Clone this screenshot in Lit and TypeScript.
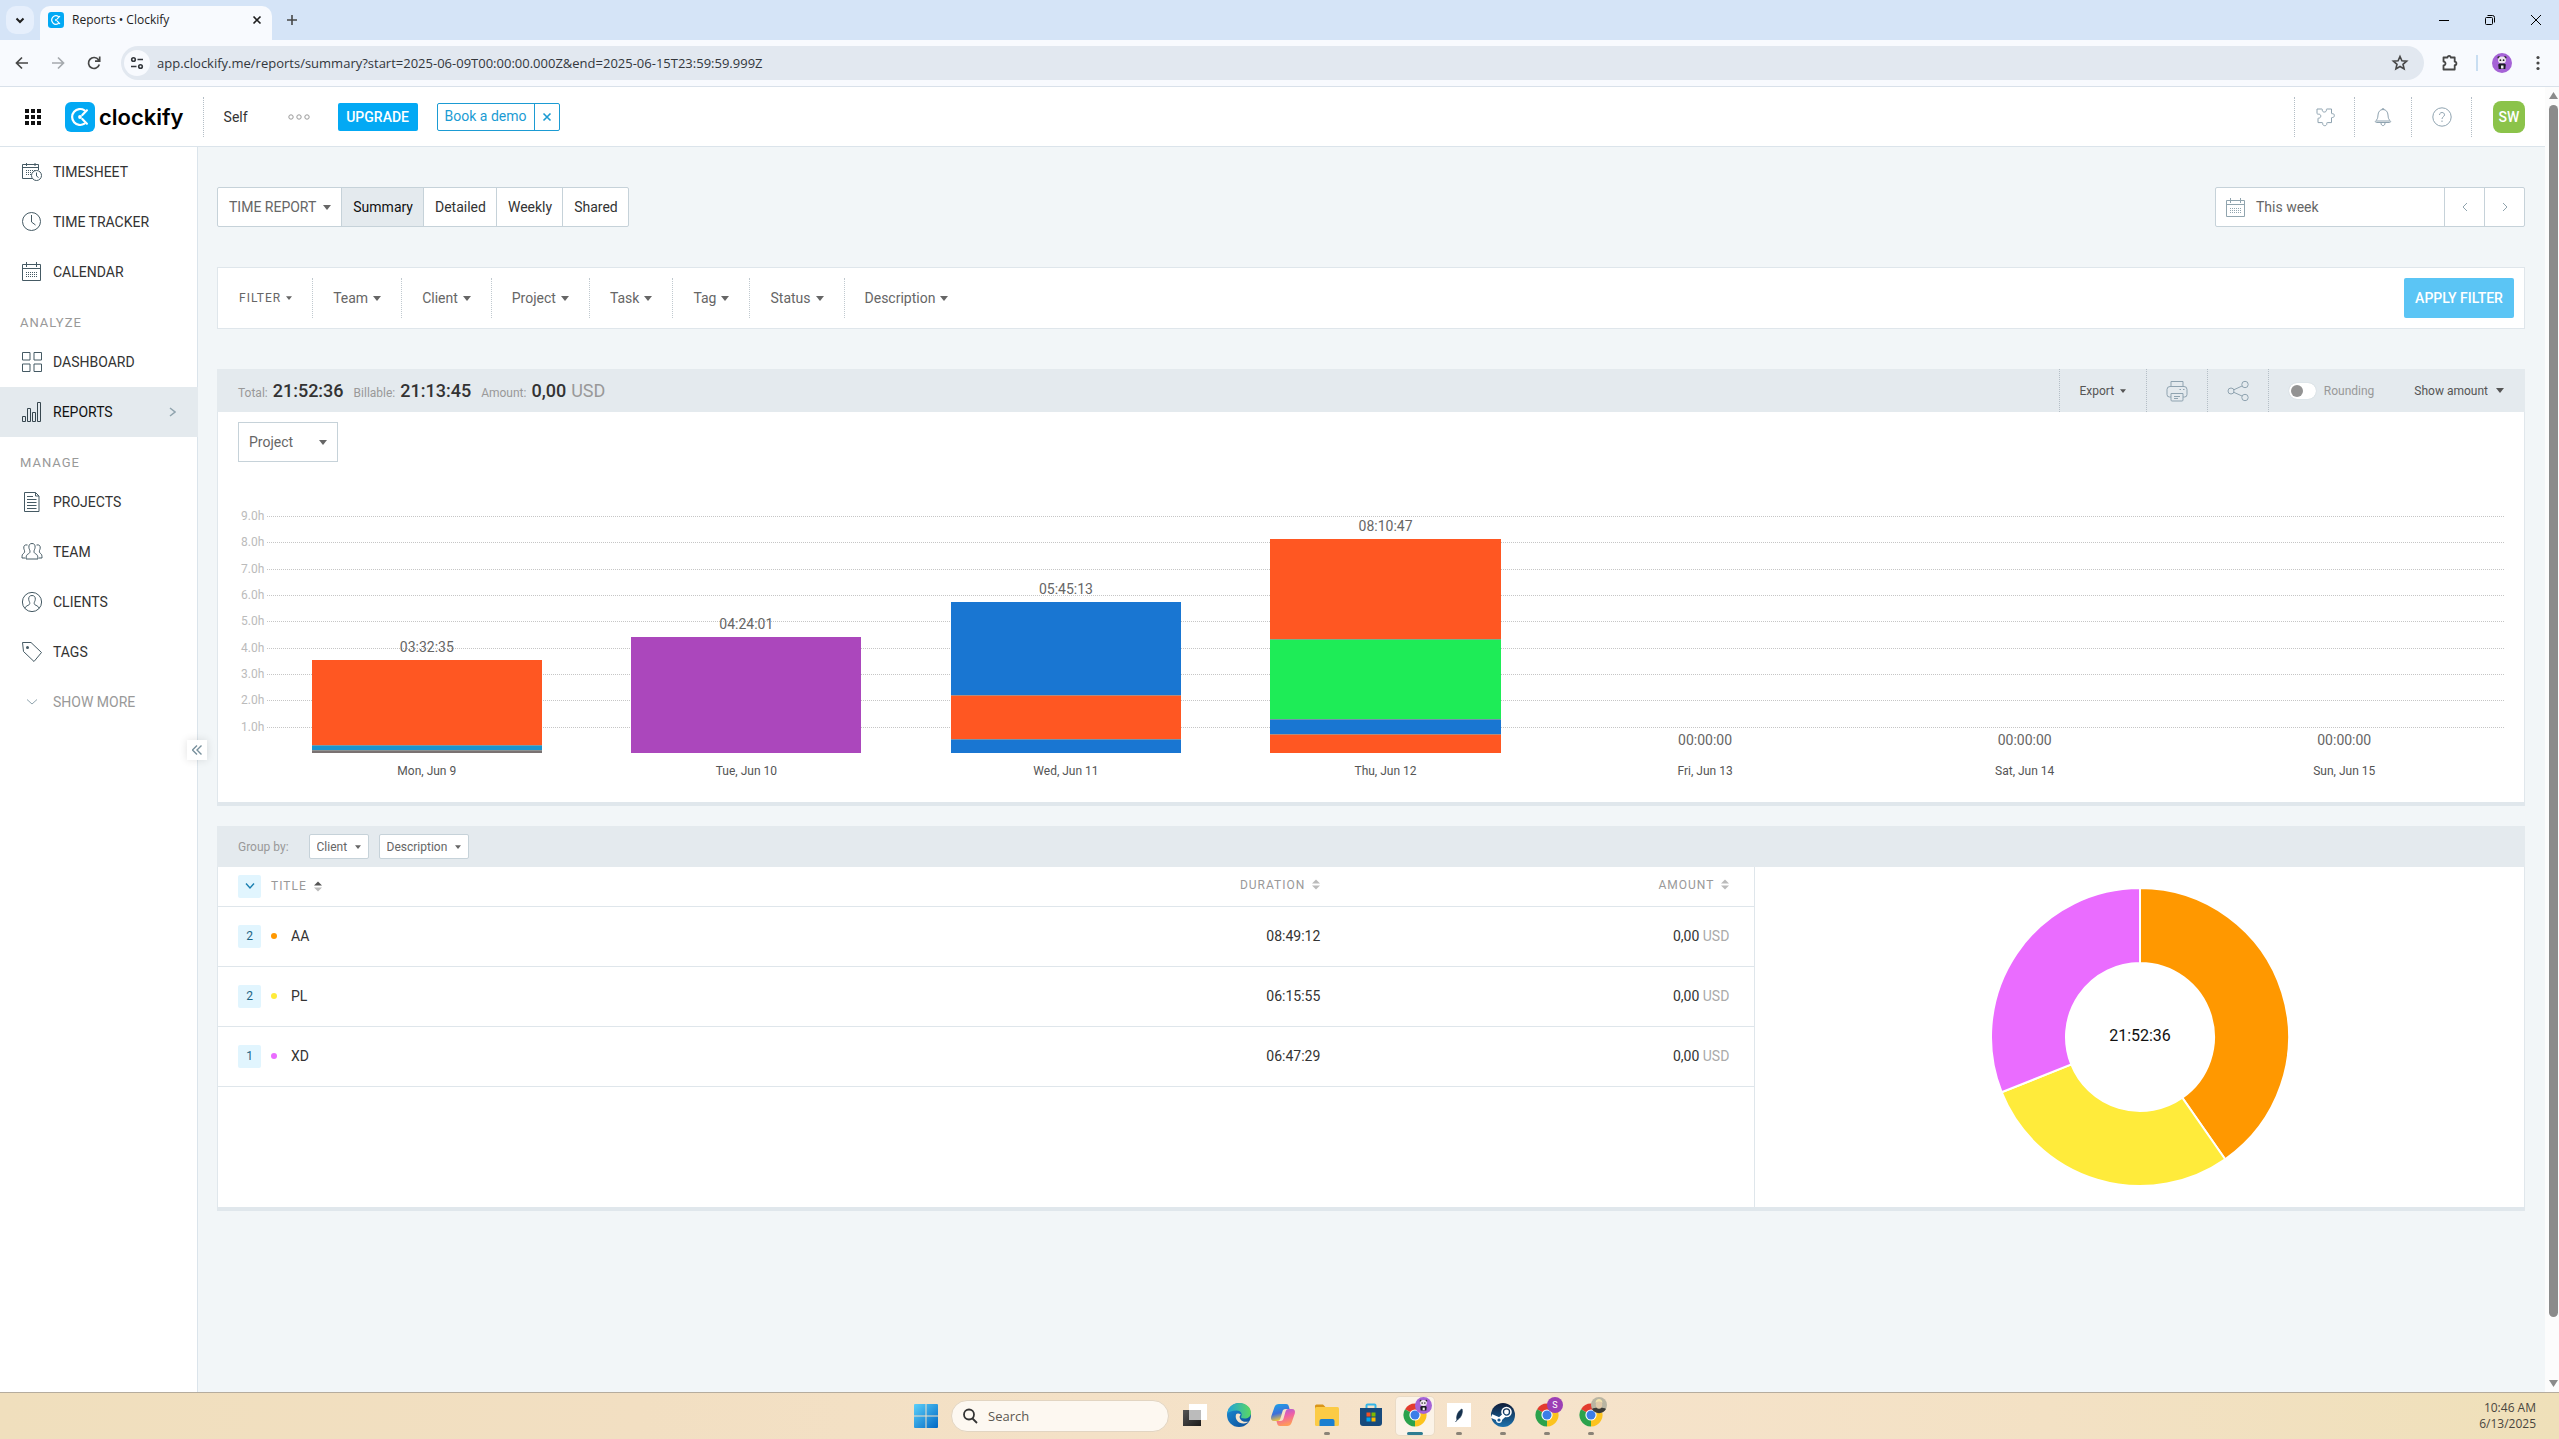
import { LitElement, html, svg, css, nothing } from "lit";
import { customElement } from "lit/decorators.js";
import { classMap } from "lit/directives/class-map.js";
import { styleMap } from "lit/directives/style-map.js";

const base = css`
  * { box-sizing: border-box; }
  button, input, select { font: inherit; color: inherit; margin: 0; padding: 0; border: 0; background: none; border-radius: 0; outline: 0; }
  button { cursor: pointer; display: inline-flex; align-items: center; justify-content: center; white-space: nowrap; }
  select { appearance: none; cursor: pointer; }
  a { color: inherit; text-decoration: none; }
  svg { display: block; flex: none; }
`;

const icon = (w: number, h: number, body: unknown, color = "currentColor", sw = 1) => html`
  <svg width=${w} height=${h} viewBox="0 0 ${w} ${h}" fill="none" stroke=${color} stroke-width=${sw} aria-hidden="true">${body}</svg>`;

const caret = (w = 8, h = 5) => html`
  <svg width=${w} height=${h} viewBox="0 0 8 5" fill="currentColor" aria-hidden="true"><path d="M0 0h8L4 5z"/></svg>`;

const calendar = svg`<path d="M1.500 3.500h18v16h-18zM1.500 7.500h18M5.500 1v5M15.500 1v5"/><path stroke-dasharray="1 1" d="M5 11.500h11M5 13.500h11M5 15.500h11"/>`;

const panda = svg`<circle cx="10" cy="10" r="10" fill="#a562d6"/><circle cx="6.800" cy="4.600" r="1.300" fill="#222"/><circle cx="13.200" cy="4.600" r="1.300" fill="#222"/><ellipse cx="10" cy="7" rx="4" ry="3.500" fill="#eee6ee"/><circle cx="8.400" cy="7.200" r=".9" fill="#222"/><circle cx="11.600" cy="7.200" r=".9" fill="#222"/><path d="M6.200 11.500l1.500-1h4.600l1.500 1-.5 4.500h-6.600z" fill="#1c1c24"/><path d="M9 12.500h2.500V15.500H9z" fill="#eee"/>`;

const clockifyMark = (size: number, r: number) => html`
  <svg width=${size} height=${size} viewBox="0 0 30 30" aria-hidden="true">
    <rect width="30" height="30" rx=${r} fill="#03a9f4"/>
    <path d="M19.500 8.300A8 8 0 1 0 19.500 21.700" fill="none" stroke="#fff" stroke-width="2.200" stroke-linecap="round"/>
    <path d="M17.300 13l4.600-4.700M17.300 17l4.600 4.700" stroke="#fff" stroke-width="2.200" stroke-linecap="round"/>
    <circle cx="15" cy="15" r="1.900" fill="#fff"/>
  </svg>`;

@customElement("browser-bar")
class BrowserBar extends LitElement {
  static styles = [base, css`
    :host { display: block; font: 12px/16px "Open Sans", "Noto Sans", sans-serif; color: #1f1f1f; }
    .strip { display: flex; align-items: flex-start; height: 40px; background: #d5e4f7; }
    .search-tabs { width: 28px; height: 28px; margin: 6px 6px 0 6px; border-radius: 10px; background: #e6effc; }
    .tab { display: flex; align-items: center; gap: 8px; width: 232px; height: 34px; margin-top: 6px; padding: 0 10px 6px 8px; border-radius: 10px 10px 0 0; background: #f8fafe; }
    .tab-name { flex: 1; }
    .new-tab { width: 28px; height: 28px; margin: 6px 0 0 6px; }
    .win { display: flex; margin-left: auto; }
    .win button { width: 46px; height: 40px; }
    .tools { display: flex; align-items: center; height: 47px; padding: 0 7px 0 8px; gap: 8px; background: #f8fafe; border-bottom: 1px solid #d9e1ea; color: #474747; }
    .tools > button { width: 28px; height: 28px; }
    .dim { color: #a5a9ae; }
    .address { flex: 1; display: flex; align-items: center; gap: 7px; height: 34px; margin-left: 5px; padding: 0 15px 0 3px; border-radius: 17px; background: #e2e8f0; }
    .site { width: 26px; height: 26px; border-radius: 13px; background: #f8fafe; }
    .url { flex: 1; min-width: 0; height: 24px; font-size: 13px; color: #33373c; }
    .bar { width: 2px; height: 16px; margin: 0 2px 0 4px; background: #c9def2; }
    .ext { margin-left: 4px; }
  `];
  render() {
    return html`
      <div class="strip">
        <button class="search-tabs" aria-label="Search tabs">${icon(10, 10, svg`<path d="M1.500 3.500L5 7l3.500-3.500"/>`, "#1f1f1f", 2)}</button>
        <div class="tab">${clockifyMark(16, 6)}<span class="tab-name">Reports • Clockify</span>
          <button aria-label="Close tab">${icon(10, 10, svg`<path d="M1.500 1.500l7 7M8.500 1.500l-7 7"/>`, "#1f1f1f", 1.6)}</button></div>
        <button class="new-tab" aria-label="New tab">${icon(12, 12, svg`<path d="M6 1v10M1 6h10"/>`, "#474747", 1.6)}</button>
        <div class="win">
          <button aria-label="Minimize">${icon(10, 10, svg`<path d="M0 5.500h10"/>`, "#000")}</button>
          <button aria-label="Restore">${icon(10, 10, svg`<rect x=".5" y="2.500" width="7" height="7" rx="1"/><path d="M2.500.5h5a2 2 0 0 1 2 2v5"/>`, "#000")}</button>
          <button aria-label="Close">${icon(10, 10, svg`<path d="M0 0l10 10M10 0L0 10"/>`, "#000")}</button>
        </div>
      </div>
      <div class="tools">
        <button aria-label="Back">${icon(16, 16, svg`<path d="M14 8H3M8 2.500L2.500 8 8 13.500"/>`, "currentColor", 1.7)}</button>
        <button class="dim" aria-label="Forward">${icon(16, 16, svg`<path d="M2 8h11M8 2.500L13.500 8 8 13.500"/>`, "currentColor", 1.7)}</button>
        <button aria-label="Reload">${icon(16, 16, svg`<path d="M13.300 9.500A5.500 5.500 0 1 1 12.500 4.800L13.500 6M13.700 1.500v4.700H9"/>`, "currentColor", 1.7)}</button>
        <div class="address">
          <button class="site" aria-label="Site information">${icon(16, 16, svg`<circle cx="4.500" cy="4.500" r="1.800"/><path d="M8.500 4.500H14M2 11.500h5.500"/><circle cx="11.500" cy="11.500" r="1.800"/>`, "#33373c", 1.6)}</button>
          <input class="url" aria-label="Address" value="app.clockify.me/reports/summary?start=2025-06-09T00:00:00.000Z&end=2025-06-15T23:59:59.999Z">
          <button aria-label="Bookmark">${icon(18, 18, svg`<path d="M9 2.500l1.900 4.300 4.700.4-3.600 3.100 1.100 4.600L9 12.500l-4.100 2.400L6 10.300 2.400 7.200l4.700-.4z"/>`, "#474747", 1.6)}</button>
        </div>
        <button class="ext" aria-label="Extensions">${icon(18, 18, svg`<path d="M2.500 3.500h4a1.600 1.600 0 0 1 3.200 0h4v4.200a1.700 1.700 0 0 1 0 3.400v4.400H2.500v-4a2 2 0 0 0 0-4z" stroke-linejoin="round"/>`, "#474747", 1.8)}</button>
        <span class="bar"></span>
        <button aria-label="Profile"><svg width="20" height="20" viewBox="0 0 20 20" aria-hidden="true">${panda}</svg></button>
        <button aria-label="Menu"><svg width="4" height="16" viewBox="0 0 4 16" fill="#474747"><circle cx="2" cy="2.500" r="1.600"/><circle cx="2" cy="8" r="1.600"/><circle cx="2" cy="13.500" r="1.600"/></svg></button>
      </div>`;
  }
}

@customElement("app-header")
class AppHeader extends LitElement {
  static styles = [base, css`
    :host { display: flex; align-items: center; height: 60px; background: #fff; border-bottom: 1px solid #dbe4eb; font: 14px/20px Roboto, sans-serif; color: #333; }
    .grid { margin: 0 24px 0 25px; }
    .logo { display: flex; align-items: center; gap: 4px; font: 600 22px/30px Inter, sans-serif; color: #000; }
    .sep { width: 0; height: 40px; border-left: 1px dotted #b4bec6; }
    .space { margin-left: 20px; }
    .logo + .sep { margin-left: 19px; }
    .dots { margin: 0 28px 0 40px; }
    .upgrade { width: 80px; height: 28px; background: #03a9f4; color: #fff; font-weight: 500; border-radius: 2px; }
    .demo { display: flex; height: 28px; margin-left: 19px; border: 1px solid #1b9bd3; border-radius: 2px; color: #1b9bd3; }
    .demo a { padding: 2px 7px; }
    .demo button { width: 25px; border-left: 1px solid #1b9bd3; }
    .right { display: flex; align-items: center; margin-left: auto; padding-right: 20px; color: #8fa3b0; }
    .right > button { width: 60px; height: 40px; border-left: 1px dotted #b4bec6; }
    .right > button.narrow { width: 57px; }
    .right > .avatar { width: 32px; height: 32px; margin-left: 21px; border: 0; border-radius: 8px; background: #8bc34a; color: #fff; font-weight: 500; }
  `];
  render() {
    return html`
      <button class="grid" aria-label="Apps"><svg width="16" height="16" fill="#111" viewBox="0 0 16 16">${[0, 6, 12].map(y => [0, 6, 12].map(x => svg`<rect x=${x} y=${y} width="4" height="4"/>`))}</svg></button>
      <a class="logo" href="#">${clockifyMark(30, 6)}<span>clockify</span></a>
      <span class="sep"></span>
      <span class="space">Self</span>
      <button class="dots" aria-label="Workspace options">${icon(22, 6, svg`<circle cx="3" cy="3" r="2.200"/><circle cx="11" cy="3" r="2.200"/><circle cx="19" cy="3" r="2.200"/>`, "#999")}</button>
      <button class="upgrade">UPGRADE</button>
      <div class="demo"><a href="#">Book a demo</a><button aria-label="Dismiss">${icon(10, 10, svg`<path d="M1.500 1.500l7 7M8.500 1.500l-7 7"/>`, "currentColor", 1.6)}</button></div>
      <div class="right">
        <button aria-label="Integrations">${icon(20, 20, svg`<path stroke-linejoin="round" d="M2 2h4.800c.5 0 .6.400.5.800-.5 3 4.600 3 4.100 0-.1-.4 0-.8.5-.8h4.600v4.300c0 .4.400.6.800.4 2.700-.6 2.700 4.200 0 3.800-.5-.1-.8.1-.8.500v4.600h-4.200c-.5 0-.6.300-.5.700.5 3.200-4.600 3.200-4.100 0 .1-.4-.1-.7-.5-.7H3V11.700c0-.5.300-.7.700-.6 2.800.2 2.800-4.200 0-3.900-1 .1-1.700-.2-1.700-1z"/>`)}</button>
        <button class="narrow" aria-label="Notifications">${icon(18, 20, svg`<path d="M9 2.500c-3.200 0-4.800 2.600-5 5.500-.2 3.400-.8 4.600-2.200 5.700-.8.7-.4 1.800.6 1.800h13.200c1 0 1.400-1.100.6-1.800-1.400-1.100-2-2.300-2.200-5.700-.2-2.900-1.800-5.500-5-5.500zM8 2.500a1 1 0 0 1 2 0M7 16c0 3.500 4 3.500 4 0M2 14h14"/>`)}</button>
        <button aria-label="Help">${icon(20, 20, svg`<circle cx="10" cy="10" r="9.200"/><path d="M7.500 8c0-3.400 5-3.200 5-.2 0 2-2.500 2-2.500 4.200M10 13.500v1.500"/>`)}</button>
        <span class="sep"></span>
        <button class="avatar">SW</button>
      </div>`;
  }
}

const navIcons: Record<string, unknown> = {
  timesheet: svg`<path d="M11 17.500H1.500v-14h16V9M1.500 6.500h16M5.500 2v3M14 2v3"/><path stroke-dasharray="1 1" d="M5 9.500h9M5 11.500h6M5 13.500h5"/><circle cx="15.500" cy="14.500" r="5" /><path d="M15.500 11.500v3.500l2 1.500"/>`,
  clock: svg`<circle cx="10.500" cy="10.500" r="9"/><path d="M10.500 4v7l4 3"/>`,
  calendar,
  dashboard: svg`<path d="M1.500 1.500h7.500v7.500H1.500zM13 1.500h7.500v7.500H13zM1.500 13h7.500v7.500H1.500zM13 13h7.500v7.500H13z"/>`,
  reports: svg`<path d="M1.500 15.500h3v5h-3zM6.500 7.500h3v13h-3zM11.500 11.500h3v9h-3zM16.500 1.500h3v19h-3z"/>`,
  projects: svg`<path d="M3.500 1.500h11l3.500 3.500v15.500H3.500zM14.500 1.500V5H18M6 5.500h6M6 8.500h9.500M6 11.500h9.500M6 14.500h9.500M6 17.500h9.500"/>`,
  team: svg`<path d="M11 2.500c-2.200 0-3.300 1.500-3.100 3.800.1 1.700.8 2.300 1 3.400.3 1.800-.2 2.300-1.400 3-1.700.9-2.400 1.800-2.500 5.300h12c-.1-3.500-.8-4.400-2.500-5.300-1.200-.7-1.700-1.200-1.400-3 .2-1.100.9-1.700 1-3.400.2-2.300-.9-3.800-3.100-3.800zM6.500 4C3.700 3.300 2.500 5 2.800 7.200c.2 1.500.8 2 .8 3 0 1.300-.4 1.800-1.300 2.400C1.200 13.400 1 14.500 1 17h3M15.500 4c2.800-.7 4 1 3.700 3.200-.2 1.500-.8 2-.8 3 0 1.300.4 1.800 1.300 2.400 1.100.8 1.300 1.900 1.300 4.400h-3"/>`,
  clients: svg`<circle cx="11" cy="11" r="9.600"/><path d="M11 4.500c-2.300 0-3.500 1.500-3.300 3.800.1 1.600.8 2.300 1 3.200.3 1.600-.2 2.200-1.600 2.800-1.500.6-2.500 1.200-3.100 3M11 4.500c2.300 0 3.500 1.500 3.300 3.800-.1 1.600-.8 2.300-1 3.200-.3 1.600.2 2.200 1.600 2.800 1.500.6 2.500 1.200 3.100 3"/>`,
  tags: svg`<path d="M1.500 1.500h8.500l10.500 10-7.500 9-10.500-10z" stroke-linejoin="round"/><circle cx="6.500" cy="6.500" r="1.500" fill="currentColor" stroke="none"/>`,
  more: svg`<path d="M6 8.500l5 4.500 5-4.500"/>`,
};

@customElement("side-nav")
class SideNav extends LitElement {
  static styles = [base, css`
    :host { display: block; position: relative; width: 198px; flex: none; background: #fff; border-right: 1px solid #dbe4eb; font: 14px/20px Roboto, sans-serif; color: #333; }
    .item { display: flex; align-items: center; gap: 10px; height: 50px; padding: 0 22px 0 21px; }
    .item svg { color: #455a64; }
    .item .go { margin-left: auto; color: #90a4ae; }
    .current { background: #e4eaee; color: #111; margin-right: -1px; }
    .current svg { color: #37474f; }
    .muted { color: #999; width: 100%; justify-content: flex-start; }
    .muted svg { color: #90a4ae; }
    h2 { height: 40px; margin: 0; padding: 16px 20px 0; font-size: 13px; line-height: 20px; font-weight: 400; letter-spacing: 1px; color: #999; }
    .fold { position: absolute; right: -10px; top: 593px; width: 20px; height: 20px; background: #fff; color: #78909c; box-shadow: 0 0 8px rgba(0, 0, 0, 0.12); }
  `];
  item(name: string, ic: string, on = false) {
    return html`<a href="#" class=${classMap({ item: true, current: on })}>${icon(22, 22, navIcons[ic])}<span>${name}</span>
      ${on ? html`<svg class="go" width="7" height="10" viewBox="0 0 7 10" fill="none" stroke="currentColor" stroke-width="1.500"><path d="M1 1l5 4-5 4"/></svg>` : nothing}</a>`;
  }
  render() {
    return html`
      <nav>
        ${this.item("TIMESHEET", "timesheet")}${this.item("TIME TRACKER", "clock")}${this.item("CALENDAR", "calendar")}
        <h2>ANALYZE</h2>
        ${this.item("DASHBOARD", "dashboard")}${this.item("REPORTS", "reports", true)}
        <h2>MANAGE</h2>
        ${this.item("PROJECTS", "projects")}${this.item("TEAM", "team")}${this.item("CLIENTS", "clients")}${this.item("TAGS", "tags")}
        <button class="item muted">${icon(22, 22, navIcons.more)}<span>SHOW MORE</span></button>
      </nav>
      <button class="fold" aria-label="Collapse sidebar">${icon(10, 10, svg`<path d="M5 .5L.5 5 5 9.500M9.500.5L5 5l4.500 4.500"/>`, "currentColor", 1.4)}</button>`;
  }
}

type Seg = { h: number; c: string };
const O = "#ff5722", B = "#1976d2", G = "#1eec57";
const days: { day: string; total: string; segs: Seg[] }[] = [
  { day: "Mon, Jun 9", total: "03:32:35", segs: [{ h: 3.23, c: O }, { h: 0.21, c: "#1a94cf" }, { h: 0.1, c: "#7a7272" }] },
  { day: "Tue, Jun 10", total: "04:24:01", segs: [{ h: 4.4, c: "#ab47bc" }] },
  { day: "Wed, Jun 11", total: "05:45:13", segs: [{ h: 3.54, c: B }, { h: 1.69, c: O }, { h: 0.52, c: B }] },
  { day: "Thu, Jun 12", total: "08:10:47", segs: [{ h: 3.84, c: O }, { h: 3.05, c: G }, { h: 0.57, c: B }, { h: 0.72, c: O }] },
  { day: "Fri, Jun 13", total: "00:00:00", segs: [] },
  { day: "Sat, Jun 14", total: "00:00:00", segs: [] },
  { day: "Sun, Jun 15", total: "00:00:00", segs: [] },
];

@customElement("report-chart")
class ReportChart extends LitElement {
  static styles = [base, css`
    :host { display: block; font: 12px/16px Roboto, sans-serif; color: #555; }
    .plot { display: grid; height: 237px; }
    .rows, .bars { grid-area: 1 / 1; min-height: 0; }
    .rows { display: flex; flex-direction: column; }
    .row { flex: 1; display: flex; gap: 3px; color: #bbb; }
    .row span { width: 23px; margin-top: -8px; }
    .row i { flex: 1; border-top: 1px dotted #c6c6c6; }
    .bars, .labels { display: flex; margin-left: 26px; }
    .col { flex: 1; display: flex; flex-direction: column; justify-content: flex-end; align-items: center; }
    .value { font-size: 14px; line-height: 20px; margin-bottom: 3px; color: #666; }
    .stack { display: flex; flex-direction: column; width: 72%; }
    .seg + .seg { border-top: 1px solid rgba(150, 160, 160, 0.7); }
    .labels { margin-top: 10px; }
    .labels span { flex: 1; text-align: center; }
  `];
  render() {
    return html`
      <div class="plot">
        <div class="rows">${[9, 8, 7, 6, 5, 4, 3, 2, 1].map(n => html`<div class="row"><span>${n}.0h</span><i></i></div>`)}</div>
        <div class="bars">${days.map(d => {
          const sum = d.segs.reduce((a, s) => a + s.h, 0);
          return html`<div class="col"><span class="value">${d.total}</span>
            <div class="stack" style=${styleMap({ height: `${(sum / 9) * 100}%` })}>
              ${d.segs.map(s => html`<div class="seg" style=${styleMap({ height: `${(s.h / sum) * 100}%`, backgroundColor: s.c })}></div>`)}
            </div></div>`;
        })}</div>
      </div>
      <div class="labels">${days.map(d => html`<span>${d.day}</span>`)}</div>`;
  }
}

const clients = [
  { n: 2, name: "AA", time: "08:49:12", sec: 31752, color: "#ff9800" },
  { n: 2, name: "PL", time: "06:15:55", sec: 22555, color: "#ffeb3b" },
  { n: 1, name: "XD", time: "06:47:29", sec: 24449, color: "#ea6cff" },
];

@customElement("report-donut")
class ReportDonut extends LitElement {
  static styles = [base, css`:host { display: flex; justify-content: center; } text { font: 16px Roboto, sans-serif; }`];
  render() {
    const total = clients.reduce((a, c) => a + c.sec, 0);
    let at = 0;
    const pt = (r: number, a: number) => `${150 + r * Math.sin(a)} ${150 - r * Math.cos(a)}`;
    const arcs = clients.map(c => {
      const a0 = (at / total) * 2 * Math.PI;
      at += c.sec;
      const a1 = (at / total) * 2 * Math.PI;
      return svg`<path fill=${c.color} stroke="#fff" stroke-width="2" d="M${pt(149, a0)}A149 149 0 0 1 ${pt(149, a1)}L${pt(74, a1)}A74 74 0 0 0 ${pt(74, a0)}Z"/>`;
    });
    return html`<svg width="300" height="300" viewBox="0 0 300 300" role="img" aria-label="Time by client">${arcs}<text x="150" y="154" text-anchor="middle" fill="#111">21:52:36</text></svg>`;
  }
}

@customElement("report-table")
class ReportTable extends LitElement {
  static styles = [base, css`
    :host { display: block; font: 14px/20px Roboto, sans-serif; color: #333; }
    table { width: 100%; border-collapse: collapse; table-layout: fixed; }
    .time { width: 409px; }
    .money { width: 409px; }
    th { height: 39px; padding: 0 25px 3px 0; font-size: 12px; line-height: 16px; font-weight: 400; letter-spacing: 1px; color: #999; border-bottom: 1px solid #dfe6eb; }
    td { height: 60px; padding: 0 25px 0 0; border-bottom: 1px solid #dfe6eb; text-align: right; }
    th { text-align: right; }
    th.lead, td.lead { padding: 0 0 0 20px; text-align: left; }
    th button { gap: 7px; letter-spacing: 1px; }
    .cell { display: flex; align-items: center; gap: 10px; }
    .badge { width: 23px; height: 23px; border-radius: 2px; background: #e1f5fe; color: #1c6484; font-size: 12px; }
    .dot { width: 6px; height: 6px; margin-right: 4px; border-radius: 3px; }
    .cur { color: #aaa; }
  `];
  sort(up: string, down = "#bbb") {
    return html`<svg width="8" height="11" viewBox="0 0 8 11" aria-hidden="true"><path d="M0 4.500h8L4 .5z" fill=${up}/><path d="M0 6.500h8l-4 4z" fill=${down}/></svg>`;
  }
  render() {
    return html`<table>
      <colgroup><col><col class="time"><col class="money"></colgroup>
      <thead><tr>
        <th class="lead"><div class="cell"><button class="badge" aria-label="Expand all">${icon(10, 8, svg`<path d="M1 1.500L5 6l4-4.500"/>`, "#1a7fb0", 1.4)}</button><button>TITLE ${this.sort("#555")}</button></div></th>
        <th><button>DURATION ${this.sort("#bbb")}</button></th>
        <th><button>AMOUNT ${this.sort("#bbb")}</button></th>
      </tr></thead>
      <tbody>${clients.map(c => html`<tr>
        <td class="lead"><div class="cell"><button class="badge" aria-label="Expand ${c.name}">${c.n}</button><span class="dot" style=${styleMap({ backgroundColor: c.color })}></span><span>${c.name}</span></div></td>
        <td>${c.time}</td>
        <td>0,00 <span class="cur">USD</span></td>
      </tr>`)}</tbody></table>`;
  }
}

const chrome = svg`
  <path d="M12 12L2.040 6.250A11.500 11.500 0 0 1 21.960 6.250z" fill="#e33b2e"/>
  <path d="M12 12L21.960 6.250A11.500 11.500 0 0 1 12 23.500z" fill="#fcc31e"/>
  <path d="M12 12v11.500A11.500 11.500 0 0 1 2.040 6.250z" fill="#2ba24c"/>
  <circle cx="12" cy="12" r="5.600" fill="#fff"/><circle cx="12" cy="12" r="4.500" fill="#3b7de8"/>`;

@customElement("task-bar")
class TaskBar extends LitElement {
  static styles = [base, css`
    :host { display: grid; grid-template-columns: 914px 1fr auto; align-items: center; height: 47px; border-top: 1px solid #b5ac9e; background: linear-gradient(90deg, #f0dfbd 0%, #f2dfc2 25%, #f6e3cb 60%, #f3e1c4 80%, #efe0b9 100%); font: 12px/16px "Open Sans", "Noto Sans", sans-serif; color: #4a463e; }
    .apps { grid-column: 2; display: flex; align-items: center; }
    .start { width: 24px; height: 38px; margin-right: 13px; }
    .search { display: flex; align-items: center; gap: 10px; width: 218px; height: 32px; margin-right: 4px; padding: 0 10px; border: 1px solid #e2d5c2; border-radius: 16px; background: #fdf8f1; }
    .search input { flex: 1; min-width: 0; font-size: 13px; }
    .search input::placeholder { color: #5c5852; opacity: 1; }
    .app { display: grid; grid-template-rows: 1fr 3px; justify-items: center; align-items: center; width: 38px; height: 38px; margin: 0 3px; border-radius: 4px; }
    .app svg { overflow: visible; }
    .app i { width: 6px; height: 3px; border-radius: 2px; }
    .open i { background: #8a8377; }
    .active { background: #fbf3e8; box-shadow: 0 0 0 1px #eadbc6; }
    .active i { width: 16px; background: #2e7d91; }
    .clock { padding-right: 23px; text-align: right; }
    .badge { font: 9px Roboto, sans-serif; }
  `];
  app(label: string, body: unknown, cls = "") {
    return html`<button class="app ${cls}" aria-label=${label}><svg width="28" height="28" viewBox="-2 -2 28 28" aria-hidden="true">${body}</svg><i></i></button>`;
  }
  render() {
    return html`
      <div class="apps">
        <button class="start" aria-label="Start"><svg width="24" height="24" viewBox="0 0 24 24" aria-hidden="true"><defs><linearGradient id="w" x2="1" y2="1"><stop stop-color="#5bd0fa"/><stop offset="1" stop-color="#0067c4"/></linearGradient></defs><path fill="url(#w)" d="M0 1a1 1 0 0 1 1-1h10.500v11.500H0zM12.500 0H23a1 1 0 0 1 1 1v10.500H12.500zM0 12.500h11.500V24H1a1 1 0 0 1-1-1zM12.500 12.500H24V23a1 1 0 0 1-1 1H12.500z"/></svg></button>
        <label class="search">${icon(16, 16, svg`<circle cx="7" cy="6.500" r="5"/><path d="M10.500 10.500l4.500 4.500"/>`, "#333", 1.8)}<input type="search" placeholder="Search" aria-label="Search"></label>
        ${this.app("Task view", svg`<defs><linearGradient id="tv" x2="1" y2="1"><stop stop-color="#555"/><stop offset="1" stop-color="#1c1c1c"/></linearGradient></defs><path d="M6 1h18v16H6z" fill="#fff"/><path d="M0 7h18v16H0z" fill="url(#tv)"/><path d="M6 7h12v10H6z" fill="#bbb"/>`)}
        ${this.app("Edge", svg`<defs><linearGradient id="e1" x2="1"><stop stop-color="#1fa2dc"/><stop offset="1" stop-color="#5bd860"/></linearGradient><linearGradient id="e2" x2="1" y2="1"><stop stop-color="#1b8fd8"/><stop offset="1" stop-color="#0c4a94"/></linearGradient></defs><circle cx="12" cy="12" r="12" fill="url(#e2)"/><path d="M.2 11C1 4.500 6 0 12.500 0 19 0 24 4.500 24 9.500c0 4-3 6-6.500 6-3 0-4-1-3.200-2.300C15.500 11 14 7.500 9.500 7.500 5 7.500 1.500 9 .2 11z" fill="url(#e1)"/><path d="M9 11.500c-1.500 5 3 9.500 8 9 2-.2 3.800-1 5.300-2.200-2.200 1-8.300.9-9.600-3.600-.4-1.400.3-2.300 1.200-3-1.700-1.600-4.100-1.700-4.900-.2z" fill="#f5e3cb"/>`)}
        ${this.app("Copilot", svg`<defs><linearGradient id="c1" x2=".3" y2="1"><stop stop-color="#19a7e8"/><stop offset=".6" stop-color="#3f6fd9"/><stop offset="1" stop-color="#f2c53d"/></linearGradient><linearGradient id="c2" x2=".3" y2="1"><stop stop-color="#9b5de5"/><stop offset=".5" stop-color="#ee5fa7"/><stop offset="1" stop-color="#ff9a5a"/></linearGradient></defs><path d="M8 1h7c2 0 2.500 1 3 3l.5 2h-4c-2 0-2.600.8-3.200 3l-1.700 6c-.7 2-1.300 3-3.300 3H3c-2.500 0-3.500-2-2.800-4.500L3.500 4C4.300 2 5.500 1 8 1z" fill="url(#c1)"/><path d="M16 23H9c-2 0-2.500-1-3-3l-.5-2h4c2 0 2.600-.8 3.200-3l1.700-6c.7-2 1.300-3 3.300-3H21c2.500 0 3.500 2 2.800 4.500L20.500 20c-.8 2-2 3-4.500 3z" fill="url(#c2)"/>`)}
        ${this.app("File Explorer", svg`<path d="M0 3a1.500 1.500 0 0 1 1.500-1.500H8L10.500 4v4H0z" fill="#d9951a"/><rect y="4" width="24" height="19" rx="1.500" fill="#fccb45"/><path d="M4.500 23v-5a2 2 0 0 1 2-2h11a2 2 0 0 1 2 2v5z" fill="#1b7fd0"/>`, "open")}
        ${this.app("Microsoft Store", svg`<path d="M7.500 6V2.500a1 1 0 0 1 1-1h7a1 1 0 0 1 1 1V6" fill="none" stroke="#35b6e8" stroke-width="2"/><path d="M1 5h22v15a3 3 0 0 1-3 3H4a3 3 0 0 1-3-3z" fill="#174a7c"/><path fill="#f25022" d="M7.500 9.500h4v4h-4z"/><path fill="#7fba00" d="M12.500 9.500h4v4h-4z"/><path fill="#00a4ef" d="M7.500 14.500h4v4h-4z"/><path fill="#ffb900" d="M12.500 14.500h4v4h-4z"/>`)}
        ${this.app("Chrome", svg`${chrome}<svg x="12" y="-6" width="17" height="17" viewBox="0 0 20 20">${panda}</svg>`, "open active")}
        ${this.app("Notes", svg`<path d="M0 0h24v24H0z" fill="#fff"/><path d="M15 6c-4 2-6 7-5 11 4-2 6-7 5-11zM10 17l-1.500 2" fill="#16324f" stroke="#16324f" stroke-width=".8"/>`, "open")}
        ${this.app("Steam", svg`<defs><linearGradient id="s" y2="1" x2="0"><stop stop-color="#101c38"/><stop offset="1" stop-color="#1c72ae"/></linearGradient></defs><circle cx="12" cy="12" r="12" fill="url(#s)"/><circle cx="15.500" cy="9" r="4.500" fill="none" stroke="#fff" stroke-width="1.600"/><circle cx="15.500" cy="9" r="2.400" fill="#fff"/><path d="M.5 13l7 3M13.500 12l-5 4.500" stroke="#fff" stroke-width="4"/><circle cx="8" cy="17" r="3" fill="#fff"/><circle cx="8" cy="17" r="1.600" fill="#1b5a90"/>`, "open")}
        ${this.app("Chrome, profile S", svg`${chrome}<circle cx="20" cy="2" r="8" fill="#9c3fb5"/><text class="badge" x="20" y="5" text-anchor="middle" fill="#fff">S</text>`, "open")}
        ${this.app("Chrome, second profile", svg`${chrome}<circle cx="20" cy="2" r="8" fill="#b9b5a2"/><path d="M13 6C15 4 25 4 27 6A8 8 0 0 1 13 6z" fill="#3c3c38"/><ellipse cx="20" cy="1.500" rx="3.200" ry="4.300" fill="#e0c9a8"/><path d="M16.500 0c0-5.500 7-5.500 7 0-1.500-2-5.500-2-7 0z" fill="#f2e3ae"/>`, "open")}
      </div>
      <div class="clock">10:46 AM<br>6/13/2025</div>`;
  }
}

@customElement("app-root")
class AppRoot extends LitElement {
  static styles = [base, css`
    :host { display: flex; flex-direction: column; min-height: 100vh; background: #f2f6f8; font: 14px/20px Roboto, sans-serif; color: #333; }
    .view { flex: 1; display: flex; }
    .page { flex: 1; min-width: 0; display: flex; flex-direction: column; }
    .body { flex: 1; display: flex; }
    main { flex: 1; min-width: 0; padding: 40px 20px 20px 19px; }
    .track { width: 14px; display: flex; flex-direction: column; align-items: center; justify-content: space-between; padding: 5px 0 5px 2px; background: #fcfcfc; color: #8b8b8b; }
    .thumb { flex: 1; width: 9px; margin: 6px 0 63px; border-radius: 5px; background: #8b8b8b; }
    .top { display: flex; justify-content: space-between; height: 40px; }
    .tabs, .range { display: flex; border: 1px solid #c6d2d9; border-radius: 2px; background: #fff; }
    .tabs > * { display: flex; align-items: center; padding: 0 10px 0 11px; border-left: 1px solid #c6d2d9; color: #333; }
    .tabs > :first-child { gap: 7px; border-left: 0; color: #666; }
    .tabs .on { background: #e4eaee; color: #111; }
    .range button { width: 40px; border-left: 1px solid #c6d2d9; color: #90a4ae; }
    .range .pick { width: 228px; padding-left: 9px; gap: 10px; border-left: 0; justify-content: flex-start; color: #666; }
    .pick svg { color: #90a4ae; }
    .filters { display: flex; align-items: center; height: 62px; margin-top: 40px; padding: 0 10px 0 1px; border: 1px solid #dfe6eb; background: #fff; color: #666; }
    .filters > button { height: 40px; gap: 5px; padding: 0 20px; border-left: 1px dotted #c0c9cf; }
    .filters > button:first-child { border-left: 0; font-size: 12px; letter-spacing: 1px; }
    .filters > .apply { height: 40px; width: 110px; margin-left: auto; padding: 0; border: 0; border-radius: 2px; background: #5bc5f5; color: #fff; font-weight: 500; }
    .card { margin-top: 40px; border: 1px solid #e0e7ec; border-width: 0 1px 4px; background: #fff; }
    .card + .card { margin-top: 20px; }
    .bar { display: flex; align-items: center; height: 43px; margin: 0 -1px; background: #e4eaee; color: #999; font-size: 12px; }
    .totals { display: flex; align-items: baseline; gap: 5px; padding: 2px 0 0 21px; }
    .totals b { margin-right: 5px; font-size: 18px; font-weight: 500; color: #333; }
    .totals .cur { font-size: 18px; }
    .totals b.last { margin: 0; }
    .acts { display: flex; align-items: center; align-self: stretch; margin-left: auto; color: #555; }
    .acts > * { height: 43px; border-left: 1px dotted #b4bec6; }
    .export { width: 87px; gap: 6px; }
    .tool { width: 61px; color: #8fa3b0; }
    .round { display: flex; align-items: center; gap: 8px; padding: 0 20px; color: #999; }
    .round input { appearance: none; width: 27px; height: 16px; padding: 2px; border-radius: 8px; background: #fff; box-shadow: 0 0 1px #b0bec5; }
    .round input::before { content: ""; display: block; width: 12px; height: 12px; border-radius: 6px; background: #939393; }
    .acts .amount { border: 0; gap: 8px; padding: 0 21px 0 20px; }
    .pad { padding: 10px 20px 23px; }
    .drop { display: inline-grid; align-items: center; border: 1px solid #c6d2d9; background: #fff; color: #666; }
    .drop > * { grid-area: 1 / 1; }
    .drop svg { justify-self: end; margin-right: 10px; pointer-events: none; }
    .drop select { width: 98px; height: 38px; padding: 0 10px; }
    .pad report-chart { margin: 54px 0 0 3px; }
    .bar.group { height: 41px; padding-left: 21px; }
    .small { margin-left: 10px; border-radius: 2px; }
    .bar span + .small { margin-left: 20px; }
    .small select { width: auto; height: 23px; padding: 0 20px 0 7px; }
    .small svg { margin-right: 7px; }
    .split { display: grid; grid-template-columns: 2fr 1fr; min-height: 340px; }
    .split report-table { border-right: 1px solid #dfe6eb; }
    .split report-donut { padding: 20px 0; }
  `];
  small(name: string) {
    return html`<div class="drop small"><select aria-label="Group by ${name}"><option>${name}</option></select>${caret(6, 4)}</div>`;
  }
  render() {
    return html`
      <browser-bar></browser-bar>
      <div class="view">
        <div class="page">
          <app-header></app-header>
          <div class="body">
            <side-nav></side-nav>
            <main>
              <div class="top">
                <div class="tabs"><button>TIME REPORT ${caret()}</button><a class="on" href="#">Summary</a><a href="#">Detailed</a><a href="#">Weekly</a><a href="#">Shared</a></div>
                <div class="range"><button class="pick">${icon(21, 21, calendar)}This week</button>
                  <button aria-label="Previous">${icon(6, 10, svg`<path d="M5 1L1 5l4 4"/>`)}</button><button aria-label="Next">${icon(6, 10, svg`<path d="M1 1l4 4-4 4"/>`)}</button></div>
              </div>
              <div class="filters">
                <button>FILTER ${caret(6, 4)}</button>
                ${["Team", "Client", "Project", "Task", "Tag", "Status", "Description"].map(f => html`<button>${f} ${caret()}</button>`)}
                <button class="apply">APPLY FILTER</button>
              </div>
              <section class="card">
                <div class="bar">
                  <div class="totals"><span>Total:</span><b>21:52:36</b><span>Billable:</span><b>21:13:45</b><span>Amount:</span><b class="last">0,00</b><span class="cur">USD</span></div>
                  <div class="acts">
                    <button class="export">Export ${caret(6, 4)}</button>
                    <button class="tool" aria-label="Print">${icon(22, 22, svg`<path d="M5 6.500v-5h12v5M5 17H3.500a2.500 2.500 0 0 1-2.500-2.500v-5A3 3 0 0 1 4 6.500h14a3 3 0 0 1 3 3v5a2.500 2.500 0 0 1-2.500 2.500H17M5 13.500h12V20a1 1 0 0 1-1 1H6a1 1 0 0 1-1-1zM8 16.500h6M8 18.500h4M13.500 9.500h1.500M17 9.500h1.500"/>`)}</button>
                    <button class="tool" aria-label="Share">${icon(22, 22, svg`<circle cx="4" cy="11" r="3"/><circle cx="18" cy="4.500" r="3.200"/><circle cx="18" cy="17.500" r="3.200"/><path d="M6.800 9.800L15 6M6.800 12.300L15 16"/>`)}</button>
                    <label class="round"><input type="checkbox">Rounding</label>
                    <button class="amount">Show amount ${caret()}</button>
                  </div>
                </div>
                <div class="pad">
                  <div class="drop"><select aria-label="Chart grouping"><option>Project</option></select>${caret()}</div>
                  <report-chart></report-chart>
                </div>
              </section>
              <section class="card">
                <div class="bar group"><span>Group by:</span>${this.small("Client")}${this.small("Description")}</div>
                <div class="split"><report-table></report-table><report-donut></report-donut></div>
              </section>
            </main>
          </div>
        </div>
        <div class="track"><svg width="9" height="7" fill="currentColor"><path d="M0 7L4.500 0 9 7z"/></svg><span class="thumb"></span><svg width="9" height="7" fill="currentColor"><path d="M0 0h9L4.500 7z"/></svg></div>
      </div>
      <task-bar></task-bar>`;
  }
}
